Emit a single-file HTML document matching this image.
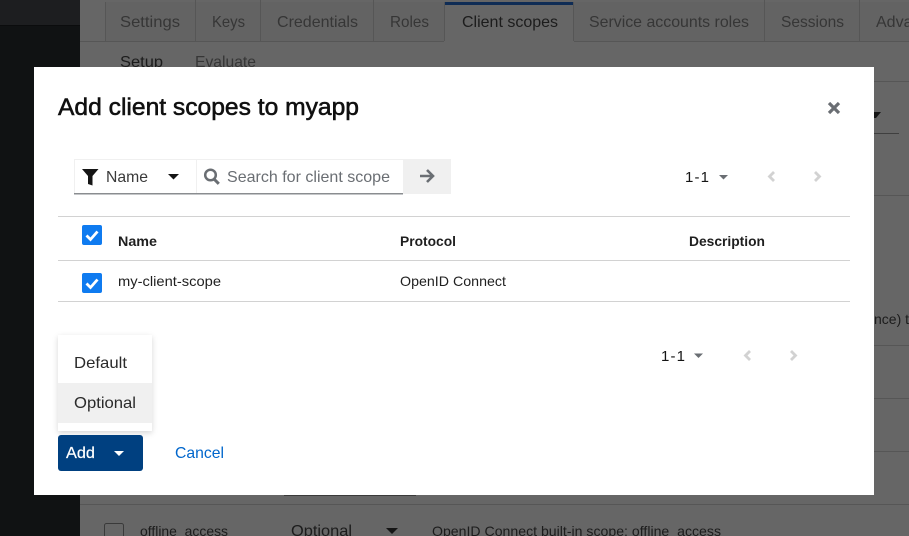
<!DOCTYPE html>
<html lang="en"><head><meta charset="utf-8"><title>Add client scopes</title>
<style>
html,body{margin:0;padding:0;width:909px;height:536px;overflow:hidden;background:#666}
svg{display:block}
text{font-family:"Liberation Sans",sans-serif}
</style></head><body>
<svg width="909" height="536" viewBox="0 0 909 536" xmlns="http://www.w3.org/2000/svg">
<!-- sidebar -->
<rect x="0" y="0" width="80" height="536" fill="#101213"/>
<rect x="0" y="0" width="80" height="25" fill="#1d1e20"/>
<rect x="0" y="25" width="80" height="1" fill="#0b0c0d"/>
<!-- main -->
<rect x="80" y="0" width="829" height="536" fill="#666666"/>
<rect x="106" y="2" width="803" height="39" fill="#636363"/>
<rect x="80" y="41" width="829" height="1" fill="#565656"/>
<rect x="444" y="5" width="130" height="37" fill="#666666"/>
<rect x="444" y="2" width="130" height="3" fill="#0f2c55"/>
<g fill="#565656">
<rect x="105" y="2" width="1" height="39"/><rect x="195" y="0" width="1" height="41"/><rect x="260" y="0" width="1" height="41"/><rect x="373" y="0" width="1" height="41"/><rect x="444" y="2" width="1" height="39"/><rect x="573" y="2" width="1" height="39"/><rect x="764" y="0" width="1" height="41"/><rect x="859" y="0" width="1" height="41"/>
<rect x="874" y="81" width="35" height="1"/><rect x="874" y="195" width="35" height="1"/><rect x="874" y="345" width="35" height="1"/><rect x="874" y="398" width="35" height="1"/><rect x="874" y="451" width="35" height="1"/>
<rect x="80" y="504" width="829" height="1"/>
<rect x="284" y="495" width="132" height="1" fill="#3a3a3a"/>
</g>
<g font-size="16" fill="#363636">
<text x="120" y="27" textLength="60" lengthAdjust="spacingAndGlyphs">Settings</text>
<text x="212" y="27" textLength="33" lengthAdjust="spacingAndGlyphs">Keys</text>
<text x="277" y="27" textLength="81" lengthAdjust="spacingAndGlyphs">Credentials</text>
<text x="390" y="27" textLength="39" lengthAdjust="spacingAndGlyphs">Roles</text>
<text x="462" y="27" textLength="96" lengthAdjust="spacingAndGlyphs" fill="#1c1c1c">Client scopes</text>
<text x="589" y="27" textLength="160" lengthAdjust="spacingAndGlyphs">Service accounts roles</text>
<text x="781" y="27" textLength="63" lengthAdjust="spacingAndGlyphs">Sessions</text>
<text x="876" y="27">Adva</text>
<text x="120" y="67" textLength="43" lengthAdjust="spacingAndGlyphs" fill="#1c1c1c">Setup</text>
<text x="195" y="67" textLength="61" lengthAdjust="spacingAndGlyphs">Evaluate</text>
<text x="140" y="536" font-size="14" textLength="88" lengthAdjust="spacingAndGlyphs" fill="#1c1c1c">offline_access</text>
<text x="291" y="536" textLength="61" lengthAdjust="spacingAndGlyphs" fill="#1c1c1c">Optional</text>
<text x="432" y="536" font-size="14" textLength="289" lengthAdjust="spacingAndGlyphs" fill="#1c1c1c">OpenID Connect built-in scope: offline_access</text>
<text x="874" y="324" font-size="14" fill="#1c1c1c">nce) t</text>
</g>
<rect x="104.5" y="523.5" width="19" height="19" rx="2" fill="none" stroke="#3a3a3a"/>
<path d="M386 528h12l-6 6z" fill="#151515"/>
<path d="M870 112h11l-5 6h-6z" fill="#151515"/>
<rect x="874" y="133" width="25" height="1" fill="#3f3f3f"/>
<!-- modal -->
<rect x="34" y="67" width="840" height="428" fill="#ffffff"/>
<text x="58" y="115" font-size="24" fill="#101010" stroke="#101010" stroke-width=".55" textLength="301" lengthAdjust="spacingAndGlyphs">Add client scopes to myapp</text>
<path d="M829 103l10 10m0-10l-10 10" stroke="#6a6e73" stroke-width="3.200" fill="none"/>
<!-- toolbar -->
<rect x="74.5" y="159.500" width="329" height="34" fill="#fff" stroke="#f0f0f0"/>
<rect x="74" y="193" width="329" height="1.500" fill="#8a8d90"/>
<rect x="196" y="160" width="1" height="33" fill="#f0f0f0"/>
<path d="M82 169h16.500l-6 7v9.500l-4.500-1.500v-8z" fill="#151515"/>
<text x="106" y="182" font-size="16" fill="#3a3a3a" textLength="42" lengthAdjust="spacingAndGlyphs">Name</text>
<path d="M168 174h11l-5.500 5.500z" fill="#151515"/>
<circle cx="210.500" cy="175" r="5.300" fill="none" stroke="#6a6e73" stroke-width="2.500"/>
<path d="M214 179l4.800 4.800" stroke="#6a6e73" stroke-width="3"/>
<text x="227" y="182" font-size="16" fill="#6a6e73" textLength="163" lengthAdjust="spacingAndGlyphs">Search for client scope</text>
<rect x="403" y="159" width="48" height="35" fill="#f0f0f0"/>
<path d="M420 176h12.500m-5.500-6l6 6-6 6" stroke="#6a6e73" stroke-width="2.600" fill="none"/>
<!-- pagination top -->
<text x="685" y="182" font-size="15" fill="#151515" textLength="24" lengthAdjust="spacing">1 - 1</text>
<path d="M719 175h9l-4.500 4.500z" fill="#6a6e73"/>
<path d="M774 172l-4.500 4.500 4.500 4.500M815 172l4.500 4.500-4.500 4.500" stroke="#d2d2d2" stroke-width="2.800" fill="none"/>
<!-- table -->
<g fill="#d2d2d2">
<rect x="58" y="216" width="792" height="1"/>
<rect x="58" y="260" width="792" height="1"/>
<rect x="58" y="301" width="792" height="1"/>
</g>
<rect x="82" y="225" width="20" height="20" rx="2" fill="#0f7bf0"/>
<path d="M86.500 235.500l4 4 7-8" stroke="#fff" stroke-width="2.800" fill="none"/>
<rect x="82" y="273" width="20" height="20" rx="2" fill="#0f7bf0"/>
<path d="M86.500 283.500l4 4 7-8" stroke="#fff" stroke-width="2.800" fill="none"/>
<g font-size="14" fill="#1f1f1f">
<text x="118" y="246" font-weight="700" font-size="13.500" textLength="39" lengthAdjust="spacingAndGlyphs">Name</text>
<text x="400" y="246" font-weight="700" font-size="13.500" textLength="56" lengthAdjust="spacingAndGlyphs">Protocol</text>
<text x="689" y="246" font-weight="700" font-size="13.500" textLength="76" lengthAdjust="spacingAndGlyphs">Description</text>
<text x="118" y="286" textLength="103" lengthAdjust="spacingAndGlyphs">my-client-scope</text>
<text x="400" y="286" textLength="106" lengthAdjust="spacingAndGlyphs">OpenID Connect</text>
</g>
<!-- pagination bottom -->
<text x="661" y="361" font-size="15" fill="#151515" textLength="24" lengthAdjust="spacing">1 - 1</text>
<path d="M694 353.500h9l-4.500 4.500z" fill="#6a6e73"/>
<path d="M750 351l-4.500 4.500 4.500 4.500M791 351l4.500 4.500-4.500 4.500" stroke="#d2d2d2" stroke-width="2.800" fill="none"/>
<!-- dropdown -->
<defs><filter id="s" x="-20%" y="-20%" width="140%" height="140%"><feDropShadow dx="0" dy="2" stdDeviation="3" flood-color="#000" flood-opacity=".16"/></filter></defs>
<rect x="58" y="335" width="94" height="96" fill="#fff" filter="url(#s)"/>
<rect x="58" y="383" width="94" height="40" fill="#f0f0f0"/>
<text x="74" y="368" font-size="16" fill="#2a2a2a" textLength="53" lengthAdjust="spacingAndGlyphs">Default</text>
<text x="74" y="408" font-size="16" fill="#2a2a2a" textLength="62" lengthAdjust="spacingAndGlyphs">Optional</text>
<!-- buttons -->
<rect x="58" y="435" width="85" height="36" rx="3" fill="#004080"/>
<text x="66" y="458" font-size="16" fill="#fff" stroke="#fff" stroke-width=".2" textLength="29" lengthAdjust="spacingAndGlyphs">Add</text>
<path d="M114 451h10l-5 5z" fill="#fff"/>
<text x="175" y="458" font-size="16" fill="#0066cc" textLength="49" lengthAdjust="spacingAndGlyphs">Cancel</text>
</svg>
</body></html>
